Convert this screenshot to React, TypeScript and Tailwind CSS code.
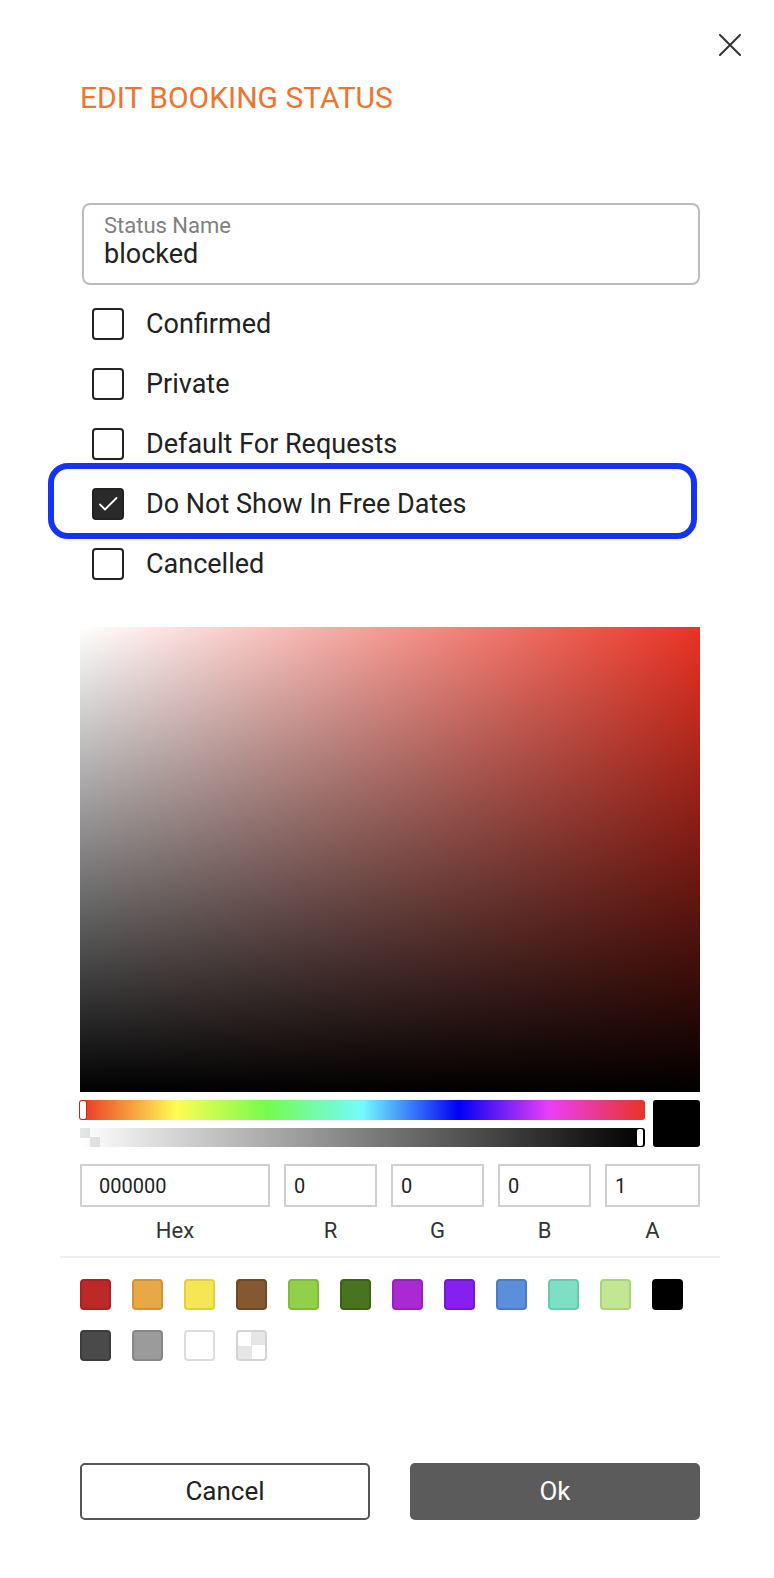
import React from 'react';

type Option = {
  label: string;
  checked: boolean;
  highlighted?: boolean;
};

const options: Option[] = [
  { label: 'Confirmed', checked: false },
  { label: 'Private', checked: false },
  { label: 'Default For Requests', checked: false },
  { label: 'Do Not Show In Free Dates', checked: true, highlighted: true },
  { label: 'Cancelled', checked: false },
];

const swatches = [
  'bg-[#be2828] border-[#a82222]',
  'bg-[#e9a846] border-[#d49235]',
  'bg-[#f5e654] border-[#e0cf3e]',
  'bg-[#845830] border-[#6f4824]',
  'bg-[#93d04a] border-[#7fbb38]',
  'bg-[#4a7320] border-[#3d6119]',
  'bg-[#ab28d4] border-[#9820be]',
  'bg-[#8520ef] border-[#7418d8]',
  'bg-[#5b8edb] border-[#4a7bc6]',
  'bg-[#7de0c4] border-[#67cbb0]',
  'bg-[#c1e792] border-[#abd37b]',
  'bg-[#000000] border-[#000000]',
  'bg-[#4a4a4a] border-[#3c3c3c]',
  'bg-[#9b9b9b] border-[#878787]',
  'bg-white border-[#dcdcdc]',
];

const fields = [
  { label: 'Hex', value: '000000', width: 'w-[190px]', pad: 'pl-[17px]' },
  { label: 'R', value: '0', width: 'w-[93px]', pad: 'pl-[8px]' },
  { label: 'G', value: '0', width: 'w-[93px]', pad: 'pl-[8px]' },
  { label: 'B', value: '0', width: 'w-[93px]', pad: 'pl-[8px]' },
  { label: 'A', value: '1', width: 'w-[95px]', pad: 'pl-[8px]' },
];

function CheckRow({ option }: { option: Option }) {
  return (
    <div className="relative flex h-[60px] items-center">
      {option.highlighted && (
        <div className="pointer-events-none absolute -left-[32px] right-[3px] top-[-11px] bottom-[-5px] rounded-[20px] border-[6px] border-[#1433f5]" />
      )}
      <div
        className={`ml-[12px] flex h-[32px] w-[32px] items-center justify-center rounded-[4px] border-2 border-[#222] ${
          option.checked ? 'bg-[#2a2a2a]' : 'bg-white'
        }`}
      >
        {option.checked && (
          <svg width="26" height="26" viewBox="0 0 26 26" fill="none">
            <path d="M5 13.5l5 5L21.5 7" stroke="#fff" strokeWidth="1.8" strokeLinecap="round" strokeLinejoin="round" />
          </svg>
        )}
      </div>
      <span className="ml-[22px] text-[27px] text-[#222]">{option.label}</span>
    </div>
  );
}

export default function App() {
  return (
    <div className="w-full bg-white font-['Roboto','Liberation_Sans',sans-serif]">
      <div className="flex justify-end pr-[33px] pt-[34px]">
        <svg width="22" height="22" viewBox="0 0 22 22" fill="none">
          <path d="M1 1l20 20M21 1L1 21" stroke="#333" strokeWidth="2" strokeLinecap="round" />
        </svg>
      </div>

      <div className="pl-[80px] pr-[74px] pb-[58px]">
        <h1 className="mt-[24px] text-[30px] leading-[36px] font-normal text-[#ee7430]">EDIT BOOKING STATUS</h1>

        <div className="ml-[2px] mt-[87px] flex h-[82px] flex-col rounded-[8px] border-2 border-[#bdbdbd] px-[20px] pt-[9px]">
          <span className="text-[22px] leading-[24px] text-[#808080]">Status Name</span>
          <span className="text-[27px] leading-[32px] text-[#222]">blocked</span>
        </div>

        <div className="mt-[9px] flex flex-col">
          {options.map((o) => (
            <CheckRow key={o.label} option={o} />
          ))}
        </div>

        <div className="mt-[33px] h-[465px] w-full bg-[#ea3323]">
          <div className="h-full w-full bg-[linear-gradient(to_right,#ffffff,rgba(255,255,255,0))]">
            <div className="h-full w-full bg-[linear-gradient(to_top,#000000,rgba(0,0,0,0))]" />
          </div>
        </div>

        <div className="mt-[8px] flex gap-[8px]">
          <div className="flex w-[565px] flex-col gap-[8px]">
            <div className="relative h-[20px] rounded-[3px] bg-[linear-gradient(to_right,#ea3323_0%,#fffd55_17%,#75fb4c_33%,#74fbfd_50%,#0000f5_67%,#ea3ff7_83%,#ea3323_100%)]">
              <div className="absolute left-0 top-[1px] h-[18px] w-[6px] rounded-[2px] bg-white shadow-[0_0_0_1px_#c02a1e]" />
            </div>
            <div className="relative h-[19px] bg-white">
              <div className="absolute left-0 top-0 h-[19px] w-[20px] bg-[conic-gradient(#fff_0_25%,#e6e6e6_0_50%,#fff_0_75%,#e6e6e6_0)]" />
              <div className="relative h-full w-full rounded-r-[3px] bg-[linear-gradient(to_right,rgba(0,0,0,0),#000000)]" />
              <div className="absolute right-[2px] top-[1px] h-[17px] w-[6px] rounded-[2px] bg-white shadow-[0_0_0_1px_#000]" />
            </div>
          </div>
          <div className="h-[47px] flex-1 rounded-[3px] bg-black" />
        </div>

        <div className="mt-[17px] flex justify-between">
          {fields.map((f) => (
            <div key={f.label} className={`${f.width} flex flex-col items-center`}>
              <div className={`flex h-[43px] w-full items-center border-2 border-[#cfcfcf] ${f.pad} text-[20px] text-[#222]`}>
                {f.value}
              </div>
              <span className="mt-[10px] text-[22px] leading-[28px] text-[#333]">{f.label}</span>
            </div>
          ))}
        </div>

        <div className="-ml-[20px] -mr-[20px] mt-[11px] h-[2px] bg-[#efefef]" />

        <div className="mt-[21px] flex flex-wrap gap-x-[21px] gap-y-[20px]">
          {swatches.map((s) => (
            <div key={s} className={`h-[31px] w-[31px] rounded-[4px] border-2 ${s}`} />
          ))}
          <div className="h-[31px] w-[31px] rounded-[4px] border-2 border-[#d4d4d4] bg-[conic-gradient(#e6e6e6_0_25%,#fff_0_50%,#e6e6e6_0_75%,#fff_0)] bg-[length:27px_27px]" />
        </div>

        <div className="mt-[102px] flex justify-between">
          <button className="h-[57px] w-[290px] rounded-[5px] border-2 border-[#555] bg-white text-[26px] text-[#222]">
            Cancel
          </button>
          <button className="h-[57px] w-[290px] rounded-[5px] bg-[#5b5b5b] text-[26px] text-white">Ok</button>
        </div>
      </div>
    </div>
  );
}
